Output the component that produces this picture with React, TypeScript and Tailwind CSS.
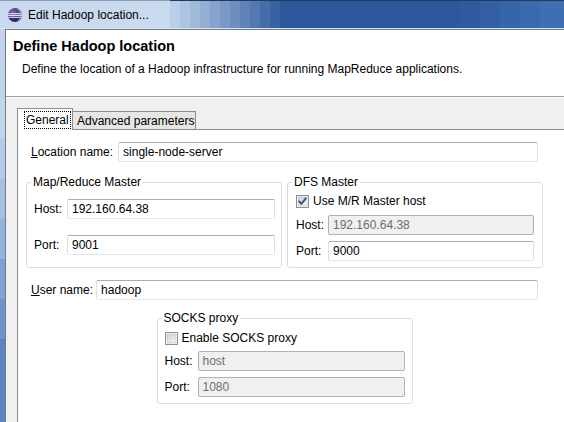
import React from "react";

const FONT = "font-['Liberation_Sans',Arial,sans-serif]";

const TITLE_BANDS = [
  "w-[10px] shrink-0 bg-[#bccfe8]",
  "w-[10px] shrink-0 bg-[#afc4e1]",
  "w-[10px] shrink-0 bg-[#a1bada]",
  "w-[10px] shrink-0 bg-[#94afd3]",
  "w-[10px] shrink-0 bg-[#87a4cc]",
  "w-[10px] shrink-0 bg-[#7a99c5]",
  "w-[10px] shrink-0 bg-[#6d8ebe]",
  "w-[10px] shrink-0 bg-[#6083b7]",
  "w-[10px] shrink-0 bg-[#5279b0]",
  "w-[10px] shrink-0 bg-[#456ea9]",
  "w-[10px] shrink-0 bg-[#3863a2]",
  "w-[180px] shrink-0 bg-[#2b589b]",
  "w-[20px] shrink-0 bg-[#2e5b9e]",
  "w-[20px] shrink-0 bg-[#3260a3]",
  "w-[20px] shrink-0 bg-[#3665a8]",
  "w-[20px] shrink-0 bg-[#3a69ad]",
  "flex-1 bg-[#3f6eb2]",
];

const FRAME_BANDS = [
  "h-[110px] shrink-0 bg-[#c2d4eb]",
  "h-[40px] shrink-0 bg-[#b4cae7]",
  "h-[40px] shrink-0 bg-[#a5bfe2]",
  "h-[40px] shrink-0 bg-[#94b2dc]",
  "h-[40px] shrink-0 bg-[#80a2d3]",
  "h-[40px] shrink-0 bg-[#6d93ca]",
  "flex-1 bg-[#5a83c0]",
];

function TextBox({ value, disabled = false }: { value: string; disabled?: boolean }) {
  return (
    <div
      className={`h-[20px] rounded-[2px] border pl-[4px] flex items-center text-[12px] leading-[14px] whitespace-nowrap overflow-hidden ${
        disabled
          ? "border-[#adb2b5] bg-[#f0f0f0] text-[#6d6d6d]"
          : "border-[#dbdfe6] border-t-[#abadb3] border-b-[#e3e9ef] bg-white text-black"
      }`}
    >
      {value}
    </div>
  );
}

function CheckBox({ checked }: { checked: boolean }) {
  const id = checked ? "cbg1" : "cbg2";
  return (
    <svg width="13" height="13" viewBox="0 0 13 13" className="shrink-0">
      <defs>
        <linearGradient id={id} x1="0" y1="0" x2="1" y2="1">
          <stop offset="0" stopColor="#cbcfd5" />
          <stop offset="1" stopColor="#f6f6f6" />
        </linearGradient>
      </defs>
      <rect x="0.5" y="0.5" width="12" height="12" fill="#fff" stroke="#8f8f8f" />
      <rect x="2" y="2" width="9" height="9" fill={`url(#${id})`} stroke="#b8bcc2" strokeWidth="0.6" />
      {checked && (
        <path d="M3.2 6.4 L5.4 8.8 L9.8 3.3" fill="none" stroke="#3c4f86" strokeWidth="1.9" strokeLinecap="round" strokeLinejoin="round" />
      )}
    </svg>
  );
}

function EclipseIcon() {
  return (
    <svg width="16" height="16" viewBox="0 0 16 16">
      <defs>
        <radialGradient id="eg" cx="0.35" cy="0.3" r="0.8">
          <stop offset="0" stopColor="#7d6fb4" />
          <stop offset="0.6" stopColor="#3b2f72" />
          <stop offset="1" stopColor="#1f1848" />
        </radialGradient>
        <clipPath id="ec">
          <circle cx="8" cy="8" r="7" />
        </clipPath>
      </defs>
      <circle cx="8" cy="8" r="7" fill="url(#eg)" />
      <g clipPath="url(#ec)">
        <rect x="0" y="6.2" width="16" height="1.1" fill="#f2eefc" />
        <rect x="0" y="8.1" width="16" height="1.1" fill="#f2eefc" />
        <rect x="0" y="10" width="16" height="0.9" fill="#d9d2f0" />
      </g>
      <path d="M9.5 1.6 A6.6 6.6 0 0 1 9.5 14.4 A7.5 7.5 0 0 0 9.5 1.6 Z" fill="#c9c1e8" opacity="0.7" />
    </svg>
  );
}

export default function App() {
  return (
    <div className={`w-[564px] h-[422px] overflow-hidden flex flex-col text-black ${FONT}`}>
      {/* Title bar */}
      <div className="h-[1px] shrink-0 flex">
        <div className="w-[170px] shrink-0 bg-[#8c9db5]" />
        <div className="flex-1 bg-[#233a5c]" />
      </div>
      <div className="h-[27px] shrink-0 flex">
        <div className="w-[170px] shrink-0 flex items-center bg-[#c9daef]">
          <div className="ml-[7px] w-[16px] h-[16px] flex items-center justify-center">
            <EclipseIcon />
          </div>
          <span className="ml-[5px] text-[12px] leading-[14px] text-black">Edit Hadoop location...</span>
        </div>
        {TITLE_BANDS.map((c, i) => (
          <div key={i} className={c} />
        ))}
      </div>
      <div className="h-[1px] shrink-0 bg-[#dce7f4]" />

      {/* Frame + content */}
      <div className="flex-1 flex min-h-0">
        <div className="w-[5px] shrink-0 flex flex-col">
          {FRAME_BANDS.map((c, i) => (
            <div key={i} className={c} />
          ))}
        </div>
        <div className="flex-1 flex flex-col border-l border-t border-[#6e7c91] min-w-0">
          {/* Header */}
          <div className="h-[67px] shrink-0 bg-white border-b border-b-[#a0a0a0] pt-[8px]">
            <div className="pl-[7px] text-[14.5px] leading-[17px] font-bold">Define Hadoop location</div>
            <div className="pl-[16px] mt-[7px] text-[12px] leading-[14px]">
              Define the location of a Hadoop infrastructure for running MapReduce applications.
            </div>
          </div>

          {/* Body */}
          <div className="flex-1 flex flex-col bg-[#f0f0f0] border-t border-t-white pt-[10px] pl-[11px] min-h-0">
            {/* Tabs */}
            <div className="flex items-end relative z-10">
              <div className="relative -mb-px h-[22px] w-[56px] border-l border-t border-r border-[#898c95] bg-white pt-[2px] pl-[6px]">
                <div className="h-[18px] w-[47px] border border-dotted border-black flex items-center pl-[1px] text-[12px] leading-[14px]">
                  General
                </div>
              </div>
              <div className="h-[18px] w-[123px] border-t border-r border-[#898c95] bg-[#e6e6e6] pl-[4px] flex items-center text-[12px] leading-[14px] whitespace-nowrap">
                Advanced parameters
              </div>
            </div>

            {/* Panel */}
            <div className="flex-1 bg-white border-l border-t border-[#898c95] pt-[12px] pl-[8px] pr-[21px] flex flex-col text-[12px] leading-[14px]">
              {/* Location name */}
              <div className="flex items-center gap-[5px] pl-[5px] pr-[5px]">
                <span className="whitespace-nowrap">
                  <span className="underline">L</span>ocation name:
                </span>
                <div className="flex-1">
                  <TextBox value="single-node-server" />
                </div>
              </div>

              {/* Groups */}
              <div className="mt-[13px] flex gap-[5px]">
                <fieldset className="flex-1 min-w-0 rounded-[3px] border border-[#d5dfe5]">
                  <legend className="ml-[4px] px-[2px] text-[12px] leading-[14px]">Map/Reduce Master</legend>
                  <div className="pt-[10px] pb-[12px] pl-[7px] pr-[6px] grid grid-cols-[auto_1fr] items-center gap-x-[5px] gap-y-[16px]">
                    <span>Host:</span>
                    <TextBox value="192.160.64.38" />
                    <span>Port:</span>
                    <TextBox value="9001" />
                  </div>
                </fieldset>
                <fieldset className="flex-1 min-w-0 rounded-[3px] border border-[#d5dfe5]">
                  <legend className="ml-[4px] px-[2px] text-[12px] leading-[14px]">DFS Master</legend>
                  <div className="pt-[5px] pb-[6px] pl-[8px] pr-[8px] flex flex-col">
                    <div className="h-[14px] flex items-center gap-[4px]">
                      <CheckBox checked />
                      <span>Use M/R Master host</span>
                    </div>
                    <div className="mt-[7px] grid grid-cols-[auto_1fr] items-center gap-x-[4px] gap-y-[6px]">
                      <span>Host:</span>
                      <TextBox value="192.160.64.38" disabled />
                      <span>Port:</span>
                      <TextBox value="9000" />
                    </div>
                  </div>
                </fieldset>
              </div>

              {/* User name */}
              <div className="mt-[12px] flex items-center gap-[3px] pl-[5px] pr-[5px]">
                <span className="whitespace-nowrap">
                  <span className="underline">U</span>ser name:
                </span>
                <div className="flex-1">
                  <TextBox value="hadoop" />
                </div>
              </div>

              {/* SOCKS proxy */}
              <fieldset className="mt-[11px] w-[256px] mx-auto min-w-0 rounded-[3px] border border-[#d5dfe5]">
                <legend className="ml-[4px] px-[2px] text-[12px] leading-[14px]">SOCKS proxy</legend>
                <div className="pt-[6px] pb-[6px] pl-[7px] pr-[7px] flex flex-col">
                  <div className="h-[14px] flex items-center gap-[4px]">
                    <CheckBox checked={false} />
                    <span>Enable SOCKS proxy</span>
                  </div>
                  <div className="mt-[6px] grid grid-cols-[auto_1fr] items-center gap-x-[5px] gap-y-[6px]">
                    <span>Host:</span>
                    <TextBox value="host" disabled />
                    <span>Port:</span>
                    <TextBox value="1080" disabled />
                  </div>
                </div>
              </fieldset>
            </div>
          </div>
        </div>
      </div>
    </div>
  );
}
